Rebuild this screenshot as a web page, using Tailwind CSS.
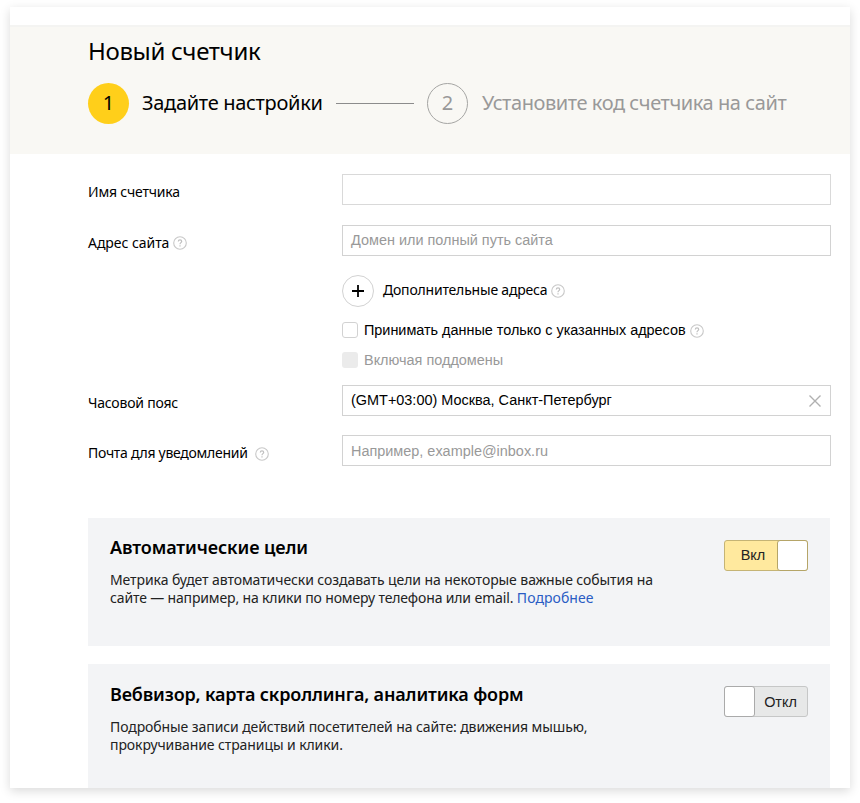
<!DOCTYPE html>
<html lang="ru">
<head>
<meta charset="utf-8">
<title>Новый счетчик</title>
<script src="https://cdn.jsdelivr.net/npm/@tailwindcss/browser@4"></script>
</head>
<body class="h-[803px] overflow-hidden bg-white px-[10px] pt-[7px] font-['Noto_Sans',sans-serif] text-black">
<svg class="hidden">
  <symbol id="help" viewBox="0 0 14 14">
    <circle cx="7" cy="7" r="6.3" fill="none" stroke="#c8c8c8" stroke-width="1.100"/>
    <path d="M5.3 5.6C5.3 4.5 6 3.9 7 3.9s1.7.6 1.7 1.5C8.700 6.600 7 6.700 7 8.200M7 9.300v1.100" fill="none" stroke="#c0c0c0" stroke-width="1.200"/>
  </symbol>
</svg>
<main class="h-[781px] w-[840px] overflow-hidden bg-white pt-[18px] shadow-[0_3px_10px_rgba(0,0,0,0.15)]">
  <header class="h-[129px] border-t-2 border-[#f4f4f2] bg-[#f9f8f4] pl-[78px]">
    <h1 class="mt-[7px] h-[34px] text-[24px] leading-[34px] tracking-[-0.35px] whitespace-nowrap"><span>Новый счетчик</span></h1>
    <div class="mt-[15px] flex h-[41px] items-center text-[20px] whitespace-nowrap">
      <div class="flex size-[41px] shrink-0 items-center justify-center rounded-full bg-[#ffcf1a] pb-[2px]">1</div>
      <div class="ml-[13px] w-[181px] pb-[2px] leading-[38px] tracking-[-0.3px]">Задайте настройки</div>
      <div class="ml-[13px] h-px w-[78px] bg-[#8c8c8c]"></div>
      <div class="ml-[13px] flex size-[41px] shrink-0 items-center justify-center rounded-full border border-[#a5a5a3] pb-[2px] text-[#999]">2</div>
      <div class="ml-[14px] pb-[2px] leading-[38px] tracking-[-0.43px] text-[#999]">Установите код счетчика на сайт</div>
    </div>
  </header>

  <form class="grid grid-cols-[254px_489px] pt-[20px] pl-[78px] text-[14px] whitespace-nowrap">
    <div class="flex h-[51px] items-start pt-[8px] leading-[20px] tracking-[-0.2px]"><span>Имя счетчика</span></div>
    <div><div class="h-[31px] border border-[#d9d9d9]"></div></div>

    <div class="flex h-[160px] items-start pt-[8px] leading-[20px] tracking-[-0.05px]"><span>Адрес сайта</span><svg class="mt-[3px] ml-[4px] size-[14px]"><use href="#help"/></svg></div>
    <div>
      <div class="h-[31px] border border-[#d2d2d2] pl-[8px] font-['Liberation_Sans',sans-serif] text-[14.44px] leading-[29px] text-[#999]"><span>Домен или полный путь сайта</span></div>
      <div class="mt-[19px] flex h-[32px] items-center">
        <div class="flex size-[32px] items-center justify-center rounded-full border border-[#d2d2d2]">
          <svg class="size-[14px]" viewBox="0 0 14 14"><path d="M7 1v12M1 7h12" stroke="#000" stroke-width="1.800"/></svg>
        </div>
        <span class="ml-[9px] pb-[3px] tracking-[-0.2px]">Дополнительные адреса</span><svg class="ml-[4px] size-[14px]"><use href="#help"/></svg>
      </div>
      <div class="mt-[14px] flex h-[18px] items-center font-['Liberation_Sans',sans-serif] text-[14.44px]">
        <div class="size-[16px] rounded-[3px] border border-[#d2d2d2]"></div>
        <span class="ml-[6px] pt-[2px] tracking-[-0.02px]">Принимать данные только с указанных адресов</span><svg class="mt-[2px] ml-[4px] size-[14px]"><use href="#help"/></svg>
      </div>
      <div class="mt-[12px] flex h-[18px] items-center font-['Liberation_Sans',sans-serif] text-[14.44px] text-[#999]">
        <div class="size-[16px] rounded-[3px] bg-[#ebebeb]"></div>
        <span class="ml-[6px] pt-[2px]">Включая поддомены</span>
      </div>
    </div>

    <div class="flex h-[50px] items-start pt-[8px] leading-[20px] tracking-[-0.2px]"><span>Часовой пояс</span></div>
    <div>
      <div class="flex h-[31px] items-center justify-between border border-[#d2d2d2] pr-[9px] pl-[8px] font-['Liberation_Sans',sans-serif] text-[14.44px]">
        <span>(GMT+03:00) Москва, Санкт-Петербург</span>
        <svg class="size-[12px]" viewBox="0 0 12 12"><path d="M.5.5l11 11M11.500.5l-11 11" stroke="#b0b0b0" stroke-width="1.400"/></svg>
      </div>
    </div>

    <div class="flex h-[31px] items-start pt-[8px] leading-[20px] tracking-[-0.28px]"><span>Почта для уведомлений</span><svg class="mt-[4px] ml-[7px] size-[14px]"><use href="#help"/></svg></div>
    <div class="h-[31px] border border-[#d2d2d2] pl-[8px] font-['Liberation_Sans',sans-serif] text-[14.44px] leading-[30px] text-[#999]"><span>Например, example@inbox.ru</span></div>
  </form>

  <section class="mt-[52px] ml-[78px] flex h-[128px] w-[742px] justify-between bg-[#f3f4f6] pt-[16px] pr-[22px] pl-[22px] whitespace-nowrap">
    <div>
      <h2 class="text-[18px] leading-[26px] font-semibold tracking-[-0.1px]"><span>Автоматические цели</span></h2>
      <p class="mt-[11px] text-[14px] leading-[18px] text-[#222]"><span class="tracking-[-0.08px]">Метрика будет автоматически создавать цели на некоторые важные события на</span><br><span class="tracking-[-0.15px]">сайте — например, на клики по номеру телефона или email. <a class="text-[#2a5cc4] tracking-[0.06px]">Подробнее</a></span></p>
    </div>
    <div class="mt-[6px] flex h-[31px] w-[84px] rounded-[3px] border border-[#c5b475] bg-[#ffe99e] font-['Liberation_Sans',sans-serif] text-[14.44px] leading-[29px] text-[#222]">
      <span class="flex-1 pl-[3px] text-center">Вкл</span>
      <div class="-m-px w-[31px] rounded-[3px] border border-[#b5a568] bg-white"></div>
    </div>
  </section>

  <section class="mt-[18px] ml-[78px] flex h-[128px] w-[742px] justify-between bg-[#f3f4f6] pt-[17px] pr-[22px] pl-[22px] whitespace-nowrap">
    <div>
      <h2 class="text-[18px] leading-[26px] font-semibold tracking-[-0.15px]"><span>Вебвизор, карта скроллинга, аналитика форм</span></h2>
      <p class="mt-[11px] text-[14px] leading-[18px] tracking-[-0.09px] text-[#222]"><span>Подробные записи действий посетителей на сайте: движения мышью,</span><br><span>прокручивание страницы и клики.</span></p>
    </div>
    <div class="mt-[5px] flex h-[31px] w-[84px] rounded-[3px] border border-[#c6c7c7] bg-[#e7e8e8] font-['Liberation_Sans',sans-serif] text-[14.44px] leading-[30px] text-[#222]">
      <div class="-m-px w-[31px] rounded-[3px] border border-[#aaa] bg-white"></div>
      <span class="flex-1 text-center">Откл</span>
    </div>
  </section>
</main>
</body>
</html>
